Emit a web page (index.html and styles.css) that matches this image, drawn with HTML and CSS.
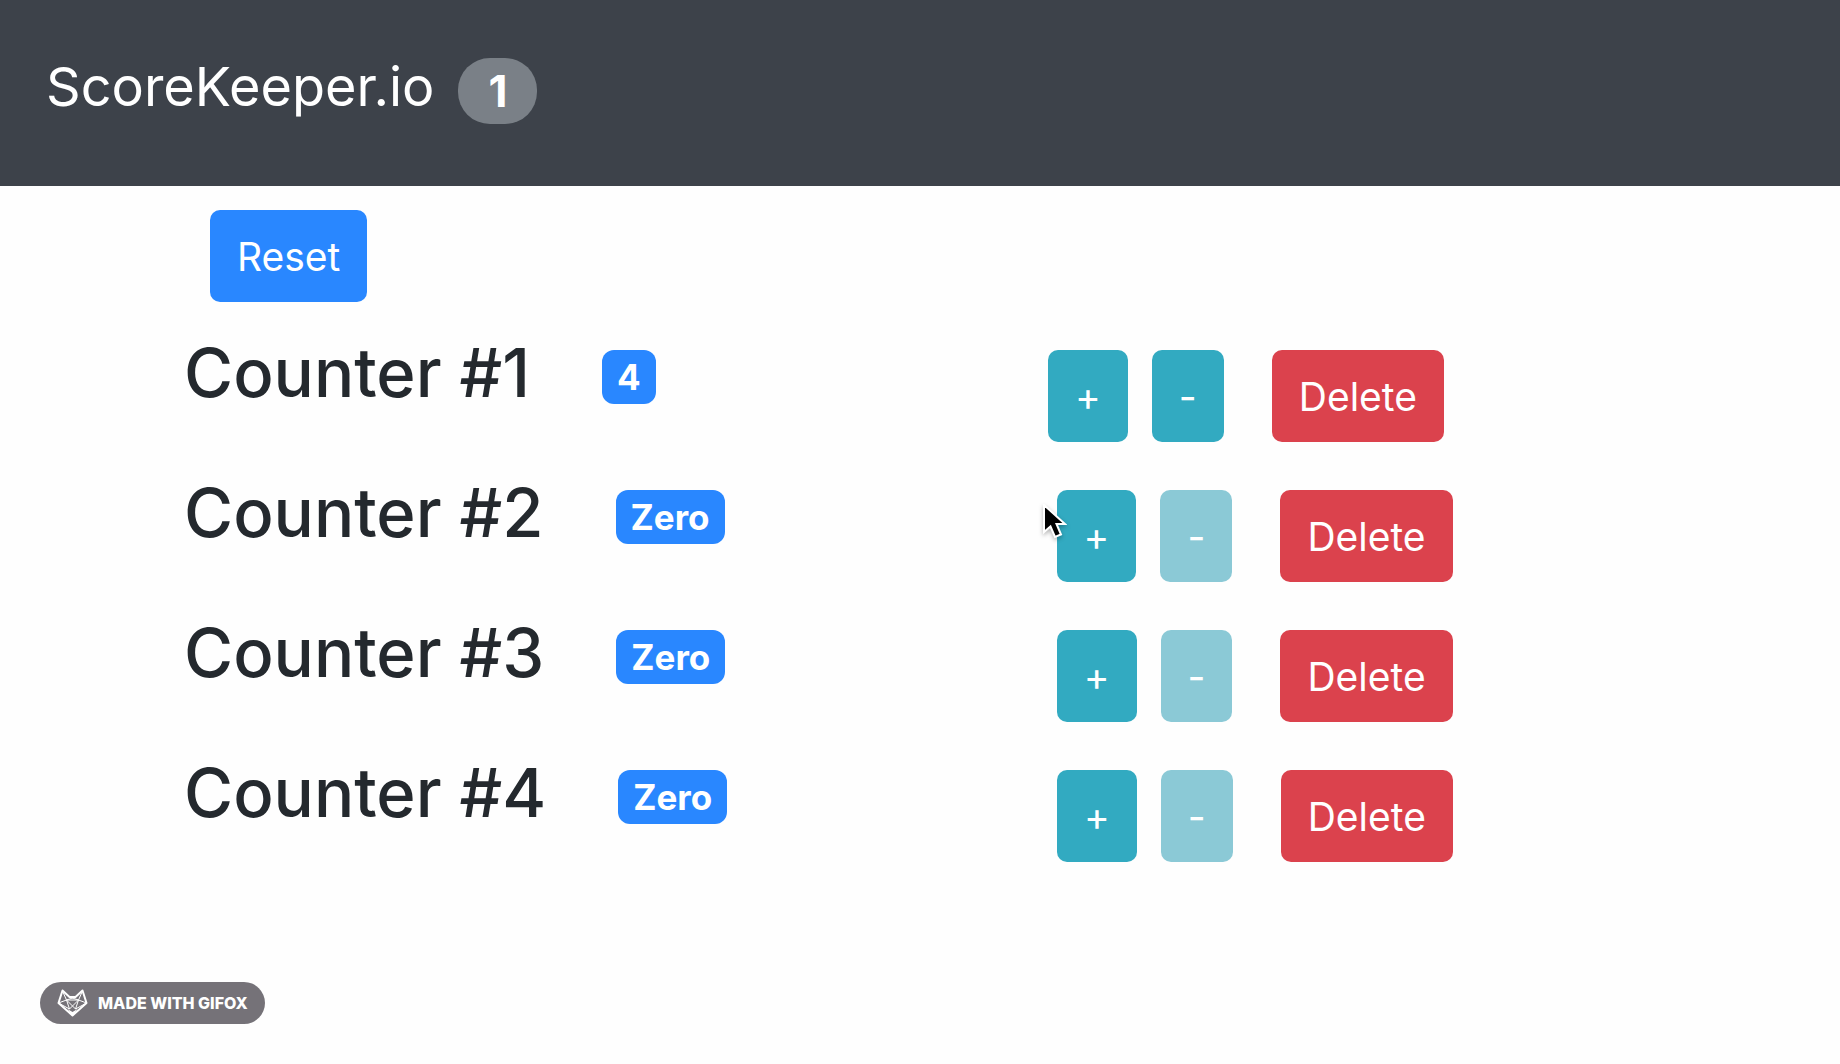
FILE: index.html
```html
<!DOCTYPE html>
<html lang="en">
<head>
<meta charset="utf-8">
<title>ScoreKeeper.io</title>
<link rel="stylesheet" href="styles.css">
</head>
<body>
<header class="navbar">
  <a class="brand" href="#">ScoreKeeper.io</a>
  <span class="total">1</span>
</header>
<main class="counters">
  <button class="btn btn-primary reset" type="button">Reset</button>
  <section class="row">
    <div class="info"><h1 class="name">Counter #1</h1><span class="badge">4</span></div>
    <div class="controls">
      <button class="btn btn-info" type="button">+</button>
      <button class="btn btn-info" type="button">-</button>
      <button class="btn btn-danger" type="button">Delete</button>
    </div>
  </section>
  <section class="row">
    <div class="info"><h1 class="name">Counter #2</h1><span class="badge">Zero</span></div>
    <div class="controls">
      <button class="btn btn-info" type="button">+</button>
      <button class="btn btn-info" type="button" disabled>-</button>
      <button class="btn btn-danger" type="button">Delete</button>
      <svg class="cursor" viewBox="0 0 24 36" aria-hidden="true"><path d="M1 1V28L7.500 22.500L12 33L18 30.500L13.500 20H22Z" fill="#000" stroke="#fff" stroke-width="2"/></svg>
    </div>
  </section>
  <section class="row">
    <div class="info"><h1 class="name">Counter #3</h1><span class="badge">Zero</span></div>
    <div class="controls">
      <button class="btn btn-info" type="button">+</button>
      <button class="btn btn-info" type="button" disabled>-</button>
      <button class="btn btn-danger" type="button">Delete</button>
    </div>
  </section>
  <section class="row">
    <div class="info"><h1 class="name">Counter #4</h1><span class="badge">Zero</span></div>
    <div class="controls">
      <button class="btn btn-info" type="button">+</button>
      <button class="btn btn-info" type="button" disabled>-</button>
      <button class="btn btn-danger" type="button">Delete</button>
    </div>
  </section>
</main>
<footer class="footer">
  <a class="gifox" href="#">
    <svg class="fox" viewBox="0 0 30 28" aria-hidden="true"><g fill="none" stroke="#fff" stroke-linejoin="round"><path d="M5 1.500L12 8H18L25 1.500L29 14L15 26.500L1 14Z" stroke-width="2"/><path d="M5 2L9 11L1 14L12 20L9 11L18 8M25 2L21 11L29 14L18 20L21 11L12 8M9 11H21M12 20L21 11M18 20L9 11" stroke-width="1"/></g><path d="M10 20L15 23L20 20L15 27Z" fill="#fff"/></svg>
    <span>MADE WITH GIFOX</span>
  </a>
</footer>
</body>
</html>
```
FILE: styles.css
```css
* {
  box-sizing: border-box;
}

body {
  margin: 0;
  min-height: 100vh;
  display: flex;
  flex-direction: column;
  background: #fefefe;
  color: #24292e;
  font-family: Inter, "Liberation Sans", sans-serif;
}

.navbar {
  display: flex;
  align-items: flex-start;
  gap: 24px;
  padding: 50px 46px 56px;
  background: #3d424a;
}

.brand {
  color: #fff;
  font-size: 54px;
  line-height: 74px;
  padding-bottom: 6px;
  text-decoration: none;
}

.total {
  margin-top: 8px;
  padding: 0 30px;
  border-radius: 32px;
  background: #7a8087;
  color: #fff;
  font-size: 44px;
  font-weight: 700;
  line-height: 66px;
}

.counters {
  margin: 0 340px 0 10%;
  padding-top: 24px;
}

.btn {
  height: 92px;
  padding: 2px 27px 0;
  border: 0;
  border-radius: 10px;
  color: #fff;
  font-family: inherit;
  font-size: 39px;
  line-height: 90px;
}

.btn-primary {
  background: #2987ff;
}

.btn-info {
  background: #32aac1;
}

.btn-info:disabled {
  background: #8bc9d6;
}

.btn-danger {
  margin-left: 24px;
  background: #db424d;
}

.reset {
  display: block;
  margin: 0 0 32px 26px;
}

.row {
  display: flex;
  height: 140px;
}

.info {
  display: flex;
  align-items: flex-start;
  flex: 7 0 auto;
}

.name {
  margin: 0;
  font-size: 67px;
  font-weight: 500;
  line-height: 78px;
}

.badge {
  margin: 16px 0 0 72px;
  padding: 0 15px;
  border-radius: 12px;
  background: #2987ff;
  color: #fff;
  font-size: 35px;
  font-weight: 700;
  line-height: 54px;
}

.controls {
  position: relative;
  display: flex;
  gap: 24px;
  flex: 1 0 auto;
  padding-top: 16px;
}

.cursor {
  position: absolute;
  left: -14px;
  top: 30px;
  width: 24px;
  height: 36px;
  filter: drop-shadow(0 2px 2px rgba(0, 0, 0, 0.3));
}

.footer {
  margin-top: auto;
  padding: 0 40px 40px;
  display: flex;
}

.gifox {
  display: flex;
  align-items: center;
  gap: 10px;
  height: 42px;
  padding: 0 17px;
  border-radius: 21px;
  background: #757278;
  color: #fff;
  font-size: 16px;
  font-weight: 800;
  text-decoration: none;
}

.fox {
  width: 31px;
  height: 28px;
}
```
